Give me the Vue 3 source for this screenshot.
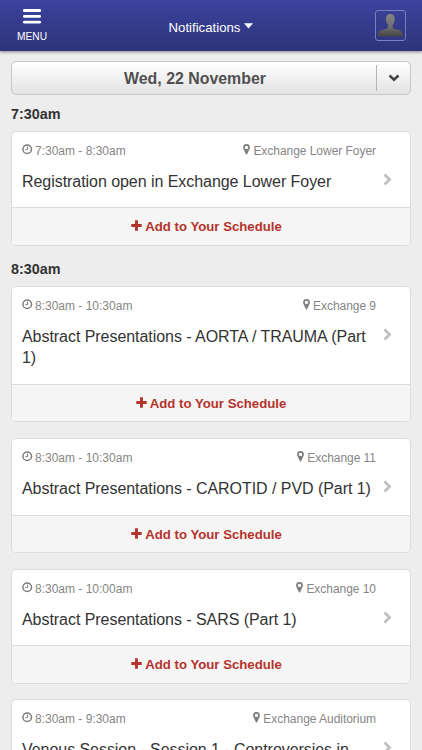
<template>
  <div class="page">
    <header class="navbar">
      <button class="menu">
        <svg width="18" height="16" viewBox="0 0 18 16">
          <path d="M1.300 1.500h15.400M1.300 7.300h15.400M1.300 13.100h15.400" stroke="#fff" stroke-width="2.800" stroke-linecap="round" />
        </svg>
        <span class="menu-label">MENU</span>
      </button>
      <div class="notifications">
        <span class="notifications-label">Notifications</span>
        <svg width="9" height="6" viewBox="0 0 9 6"><path d="M0 .2h9L4.500 5.600z" fill="#fff" /></svg>
      </div>
      <div class="avatar">
        <svg width="29" height="29" viewBox="0 0 29 29">
          <defs>
            <linearGradient id="person" x1="0" y1="0" x2="0" y2="1">
              <stop offset="0" stop-color="#858585" />
              <stop offset="0.6" stop-color="#6c6c6c" />
              <stop offset="1" stop-color="#444" />
            </linearGradient>
          </defs>
          <path
            d="M14.300 3c3 0 4.500 2.200 4.400 5.300-.1 2.700-.9 4.300-2 5.500v2.700c.2 1.300 1.800 1.500 4.400 2.100 3.900.9 5.700 2.600 6.100 6.900H1.400c.4-4.300 2.200-6 6.100-6.900 2.600-.6 4.200-.8 4.400-2.100v-2.700c-1.100-1.200-1.900-2.800-2-5.500C9.800 5.200 11.300 3 14.300 3z"
            fill="url(#person)"
          />
        </svg>
      </div>
    </header>

    <main class="content">
      <div class="date-select">
        <span class="date-text"><span class="date-label">Wed, 22 November</span></span>
        <span class="date-toggle">
          <svg width="12" height="8" viewBox="0 0 12 8">
            <path d="M1.500 1.500L6 5.700l4.500-4.200" fill="none" stroke="#444" stroke-width="2.500" />
          </svg>
        </span>
      </div>

      <section v-for="group in groups" :key="group.time">
        <h2 class="group-time"><span class="group-label">{{ group.time }}</span></h2>
        <div v-for="session in group.sessions" :key="session.title" class="card">
          <div class="card-body">
            <div class="meta">
              <span class="meta-item">
                <svg class="clock" width="11" height="11" viewBox="0 0 11 11">
                  <circle cx="5.200" cy="5.200" r="4.300" fill="none" stroke="#7e7e7e" stroke-width="1.500" />
                  <path d="M5.600 2.600v3H3.300" fill="none" stroke="#7e7e7e" stroke-width="1" />
                </svg>
                <span class="meta-text">{{ session.time }}</span>
              </span>
              <span class="meta-item room">
                <svg class="pin" width="7" height="11" viewBox="0 0 7 11">
                  <path
                    fill-rule="evenodd"
                    d="M3.500 0A3.400 3.400 0 0 0 .1 3.400c0 .8.200 1.300.5 1.900l2.300 4.900c.2.500 1 .5 1.200 0l2.300-4.900c.3-.6.5-1.100.5-1.900A3.400 3.400 0 0 0 3.500 0zm0 1.700a1.700 1.700 0 1 1 0 3.400 1.700 1.700 0 0 1 0-3.400z"
                    fill="#7e7e7e"
                  />
                </svg>
                <span class="meta-text">{{ session.room }}</span>
              </span>
            </div>
            <div class="title-row">
              <h3 class="title">{{ session.title }}</h3>
              <svg class="chevron" width="9" height="13" viewBox="0 0 9 13">
                <path d="M1.500 1.500l5 5-5 5" fill="none" stroke="#bfbfbf" stroke-width="2.800" />
              </svg>
            </div>
          </div>
          <a class="add" :class="{ centered: session.centered }">
            <svg class="plus" width="11" height="11" viewBox="0 0 11 11">
              <path d="M5.500.3v10.400M.3 5.500h10.400" stroke="#b5332d" stroke-width="2.900" />
            </svg>
            <span class="add-label">Add to Your Schedule</span>
          </a>
        </div>
      </section>
    </main>
  </div>
</template>

<script setup>
import { ref } from 'vue';

const groups = ref([
  {
    time: '7:30am',
    sessions: [
      { time: '7:30am - 8:30am', room: 'Exchange Lower Foyer', title: 'Registration open in Exchange Lower Foyer' },
    ],
  },
  {
    time: '8:30am',
    sessions: [
      { time: '8:30am - 10:30am', room: 'Exchange 9', title: 'Abstract Presentations - AORTA / TRAUMA (Part 1)', centered: true },
      { time: '8:30am - 10:30am', room: 'Exchange 11', title: 'Abstract Presentations - CAROTID / PVD (Part 1)' },
      { time: '8:30am - 10:00am', room: 'Exchange 10', title: 'Abstract Presentations - SARS (Part 1)' },
      { time: '8:30am - 9:30am', room: 'Exchange Auditorium', title: 'Venous Session - Session 1 - Controversies in' },
    ],
  },
]);
</script>

<style>
body {
  margin: 0;
  overflow: hidden;
}
</style>

<style scoped>
.page {
  height: 750px;
  overflow: hidden;
  background: #ededed;
  color: #333;
  font-family: "Liberation Sans", Arial, sans-serif;
}

.navbar {
  position: relative;
  box-sizing: border-box;
  height: 51px;
  display: grid;
  grid-template-columns: 64px 1fr 64px;
  background: linear-gradient(#3b439f, #2e3479);
  box-shadow: 0 1px 3px rgba(0, 0, 0, 0.45);
  color: #fff;
}

.menu {
  display: flex;
  flex-direction: column;
  align-items: center;
  padding: 9px 0 0;
  border: 0;
  background: none;
  color: #fff;
  font-family: inherit;
}

.menu-label {
  margin-top: 5px;
  font-size: 10.200px;
  line-height: 14px;
}

.notifications {
  display: flex;
  justify-content: center;
  align-items: center;
  gap: 4px;
  padding-top: 3px;
  font-size: 13.200px;
}

.notifications svg {
  margin-bottom: 3px;
}

.avatar {
  justify-self: start;
  width: 29px;
  height: 29px;
  margin: 10px 0 0 17px;
  border: 1px solid #7880bd;
  border-radius: 3px;
}

.avatar svg {
  display: block;
}

.content {
  padding: 10px 11px 0;
}

.date-select {
  box-sizing: border-box;
  height: 34px;
  display: flex;
  align-items: center;
  border: 1px solid #c8c8c8;
  border-radius: 5px;
  background: linear-gradient(#fff, #e3e3e3);
}

.date-text {
  flex: 1;
  padding: 2px 0 0 2px;
  text-align: center;
  color: #505050;
  font-size: 15.900px;
  font-weight: bold;
}

.date-toggle {
  width: 33px;
  height: 26px;
  display: flex;
  align-items: center;
  justify-content: center;
  border-left: 1px solid #b5b5b5;
}

.group-time {
  margin: 0;
  padding-top: 9px;
  height: 26.500px;
  font-size: 14.400px;
  line-height: 20px;
}

.card {
  box-sizing: border-box;
  margin-bottom: 15.600px;
  border: 1px solid #dcdcdc;
  border-radius: 5px;
  background: #fff;
  overflow: hidden;
}

section + section .group-time {
  padding-top: 0;
  height: 27px;
  margin-top: -2.500px;
}

.card-body {
  padding: 10px 0 15px 10px;
}

.meta {
  display: flex;
  justify-content: space-between;
  padding-right: 34px;
  height: 18px;
  color: #858585;
  font-size: 12px;
  line-height: 18px;
}

.meta-item {
  display: flex;
  gap: 3px;
}

.room {
  letter-spacing: -0.040px;
}

.clock,
.pin {
  margin-top: 2px;
}

.clock {
  margin-right: -1px;
}

.title-row {
  display: flex;
  justify-content: space-between;
  padding: 11px 18px 0 0;
}

.title {
  width: 352px;
  margin: 0;
  font-size: 16px;
  font-weight: normal;
  letter-spacing: -0.050px;
  line-height: 21.600px;
}

.chevron {
  flex: none;
  margin-top: 2px;
}

.add {
  display: flex;
  justify-content: center;
  gap: 3px;
  height: 36.500px;
  padding-right: 9px;
  border-top: 1px solid #dcdcdc;
  background: #f5f5f5;
  color: #b5332d;
  font-size: 13.200px;
  font-weight: bold;
  line-height: 38px;
}

.add.centered {
  padding-right: 0;
}

.plus {
  margin-top: 12px;
}
</style>
